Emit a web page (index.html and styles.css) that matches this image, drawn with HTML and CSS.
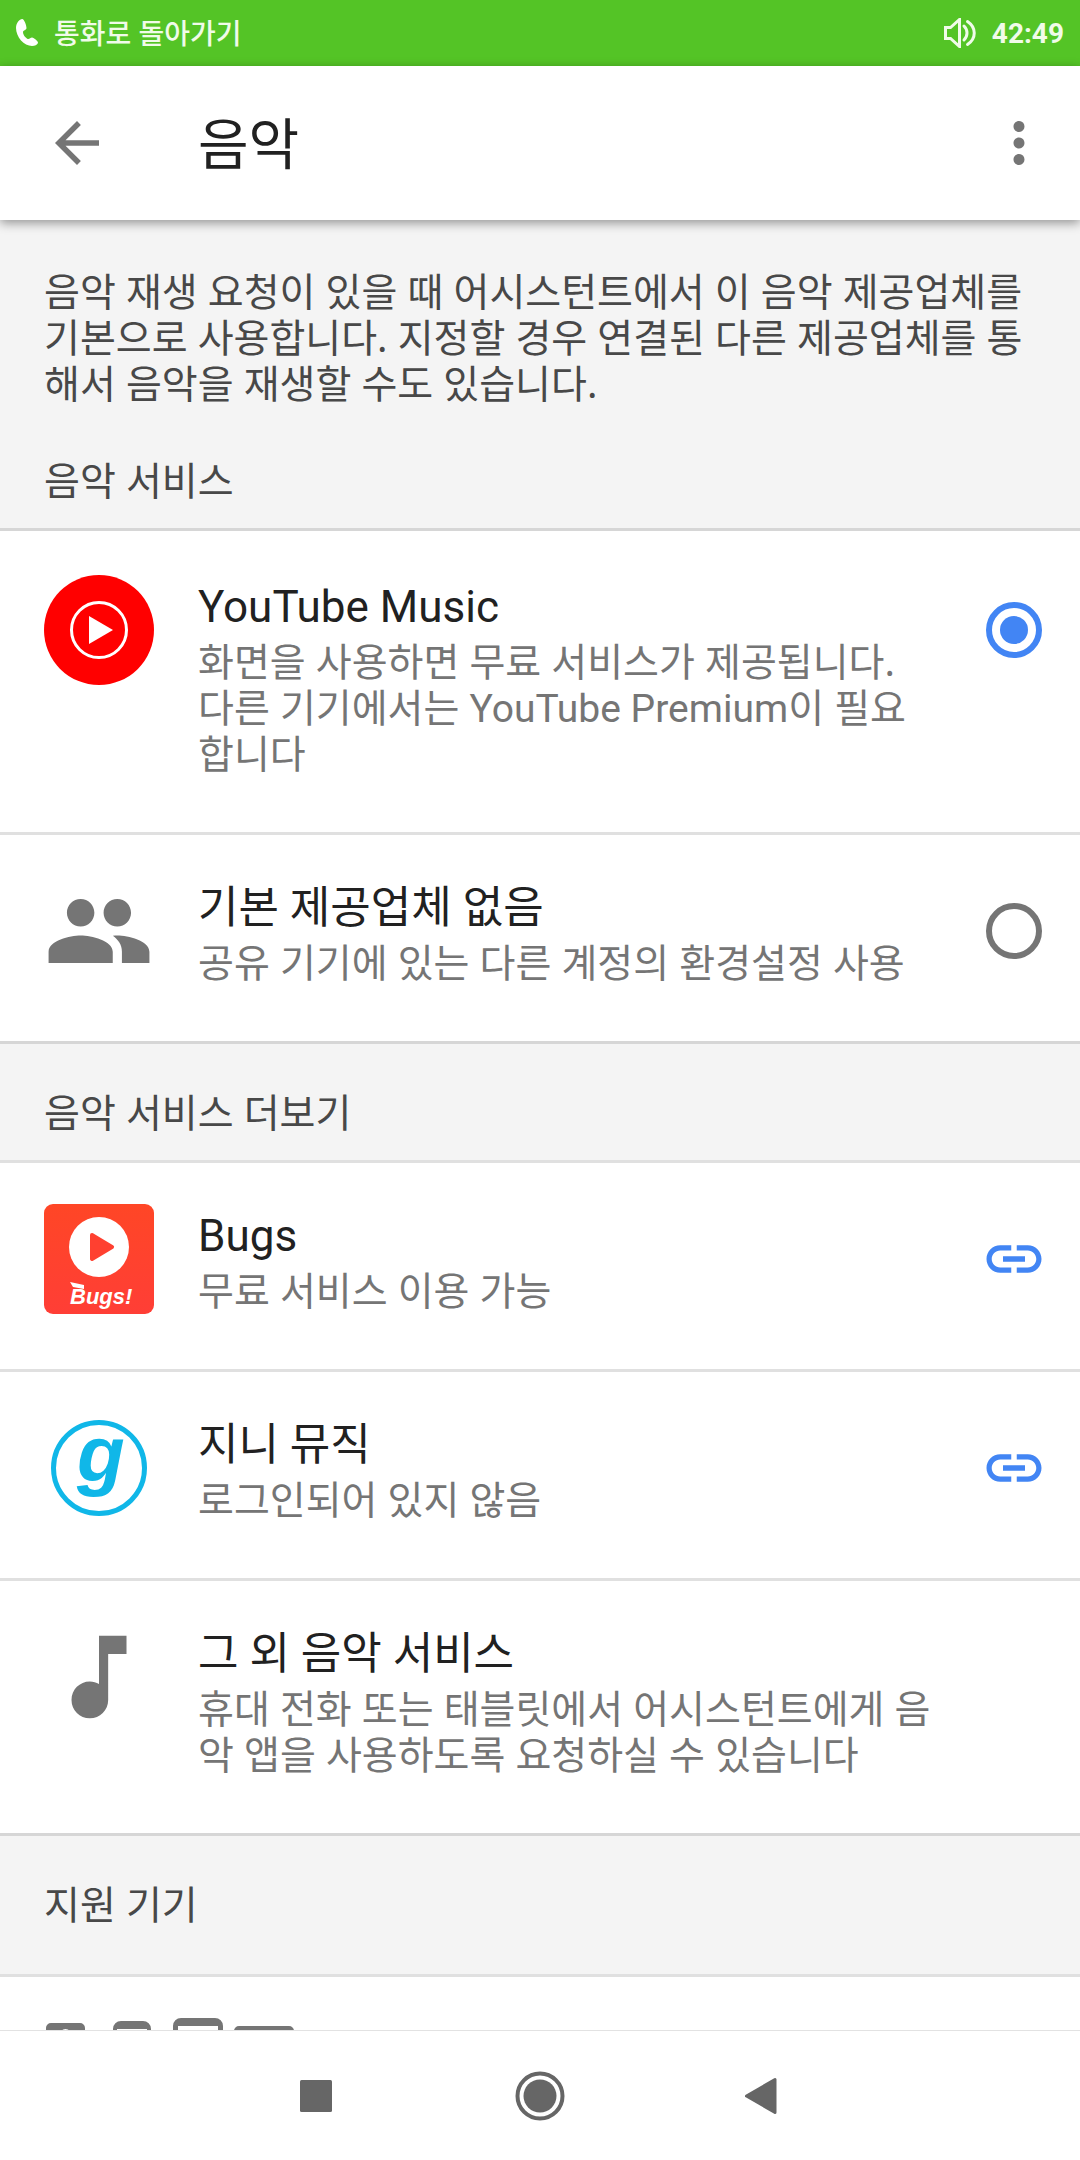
FILE: index.html
```html
<!DOCTYPE html>
<html lang="ko">
<head>
<meta charset="utf-8">
<meta name="viewport" content="width=device-width, initial-scale=1">
<title>음악</title>
<link rel="stylesheet" href="styles.css">
</head>
<body>
<button class="call-bar" type="button">
  <svg class="call-icon" viewBox="0 0 24 30" aria-hidden="true"><path d="M7 1C3 2 1 6 1 10c0 9 8 18 16 18 3 0 5-1 6-3 .6-1.300-4-5.500-6-5.500-1.500 0-2.500 1.700-4 1.500C11 20.500 8 17 8 14c0-1.500 3.500-2 3.500-4C11.500 7.500 9 .500 7 1z"/></svg>
  <span class="call-label">통화로 돌아가기</span>
  <svg class="volume-icon" viewBox="0 0 32 30" aria-hidden="true"><path d="M1.500 9.500h5L15.500 1.500v27L6.500 20.500h-5z"/><path d="M20 8c4 4 4 10 0 14"/><path d="M23.500 3.500c9 6 9 17 0 23"/></svg>
  <span class="call-time">42:49</span>
</button>

<header class="app-bar">
  <button class="icon-button" type="button" aria-label="뒤로">
    <svg class="icon" viewBox="0 0 24 24"><path d="M20 11H7.830l5.590-5.590L12 4l-8 8 8 8 1.410-1.410L7.830 13H20v-2z"/></svg>
  </button>
  <h1 class="app-title">음악</h1>
  <button class="icon-button" type="button" aria-label="옵션 더보기">
    <svg class="icon" viewBox="0 0 24 24"><path d="M12 8c1.100 0 2-.900 2-2s-.900-2-2-2-2 .900-2 2 .900 2 2 2zm0 2c-1.100 0-2 .900-2 2s.900 2 2 2 2-.900 2-2-.900-2-2-2zm0 6c-1.100 0-2 .900-2 2s.900 2 2 2 2-.900 2-2-.900-2-2-2z"/></svg>
  </button>
</header>

<main class="content">
  <div class="intro">
    <p class="intro-text">음악 재생 요청이 있을 때 어시스턴트에서 이 음악 제공업체를 기본으로 사용합니다. 지정할 경우 연결된 다른 제공업체를 통해서 음악을 재생할 수도 있습니다.</p>
    <h2 class="label">음악 서비스</h2>
  </div>

  <div class="group" role="radiogroup" aria-label="음악 서비스">
    <label class="row row-first" for="youtube">
      <svg class="logo" viewBox="0 0 110 110" aria-hidden="true">
        <circle cx="55" cy="55" r="55" fill="#f00"/>
        <circle cx="55" cy="55" r="27.500" fill="none" stroke="#fff" stroke-width="3"/>
        <path d="M45 41l24 14-24 14z" fill="#fff"/>
      </svg>
      <span class="row-text">
        <span class="row-title">YouTube Music</span>
        <span class="row-note">화면을 사용하면 무료 서비스가 제공됩니다. 다른 기기에서는 <span class="latin">YouTube Premium</span>이 필요합니다</span>
      </span>
      <span class="action"><input class="radio" type="radio" name="provider" id="youtube" checked></span>
    </label>
    <label class="row" for="none">
      <svg class="logo glyph" viewBox="0 0 24 24" aria-hidden="true"><path d="M16 11c1.660 0 2.990-1.340 2.990-3S17.660 5 16 5c-1.660 0-3 1.340-3 3s1.340 3 3 3zm-8 0c1.660 0 2.990-1.340 2.990-3S9.660 5 8 5C6.340 5 5 6.340 5 8s1.340 3 3 3zm0 2c-2.330 0-7 1.170-7 3.500V19h14v-2.500c0-2.330-4.670-3.500-7-3.500zm8 0c-.290 0-.620.020-.970.050 1.160.840 1.970 1.970 1.970 3.450V19h6v-2.500c0-2.330-4.670-3.500-7-3.500z"/></svg>
      <span class="row-text">
        <span class="row-title">기본 제공업체 없음</span>
        <span class="row-note">공유 기기에 있는 다른 계정의 환경설정 사용</span>
      </span>
      <span class="action"><input class="radio" type="radio" name="provider" id="none"></span>
    </label>
  </div>

  <h2 class="label section">음악 서비스 더보기</h2>
  <div class="group group-soft">
    <a class="row" href="#bugs">
      <svg class="logo" viewBox="0 0 110 110" aria-hidden="true">
        <defs><linearGradient id="bugs-fill" x1="0" y1="0" x2="0" y2="1"><stop offset="0" stop-color="#ff4626"/><stop offset="1" stop-color="#ff3e36"/></linearGradient></defs>
        <rect width="110" height="110" rx="9" fill="url(#bugs-fill)"/>
        <circle cx="55" cy="43" r="30" fill="#fff"/>
        <path d="M48 31l20 12-20 12z" fill="#ff4030" stroke="#ff4030" stroke-width="4" stroke-linejoin="round"/>
        <path d="M26 78l14 3v4l-11-2z" fill="#fff"/>
        <text class="bugs-name" x="26" y="100">Bugs!</text>
      </svg>
      <span class="row-text">
        <span class="row-title">Bugs</span>
        <span class="row-note">무료 서비스 이용 가능</span>
      </span>
      <span class="action"><svg class="icon link-icon" viewBox="0 0 24 24" aria-hidden="true"><path d="M3.900 12c0-1.710 1.390-3.100 3.100-3.100h4V7H7c-2.760 0-5 2.240-5 5s2.240 5 5 5h4v-1.900H7c-1.710 0-3.100-1.390-3.100-3.100zM8 13h8v-2H8v2zm9-6h-4v1.900h4c1.710 0 3.100 1.390 3.100 3.100s-1.390 3.100-3.100 3.100h-4V17h4c2.760 0 5-2.240 5-5s-2.240-5-5-5z"/></svg></span>
    </a>
    <a class="row" href="#genie">
      <svg class="logo" viewBox="0 0 110 110" aria-hidden="true">
        <circle cx="55" cy="55" r="45.500" fill="none" stroke="#10b7e8" stroke-width="5"/>
        <text class="genie-name" x="33" y="68">g</text>
      </svg>
      <span class="row-text">
        <span class="row-title">지니 뮤직</span>
        <span class="row-note">로그인되어 있지 않음</span>
      </span>
      <span class="action"><svg class="icon link-icon" viewBox="0 0 24 24" aria-hidden="true"><path d="M3.900 12c0-1.710 1.390-3.100 3.100-3.100h4V7H7c-2.760 0-5 2.240-5 5s2.240 5 5 5h4v-1.900H7c-1.710 0-3.100-1.390-3.100-3.100zM8 13h8v-2H8v2zm9-6h-4v1.900h4c1.710 0 3.100 1.390 3.100 3.100s-1.390 3.100-3.100 3.100h-4V17h4c2.760 0 5-2.240 5-5s-2.240-5-5-5z"/></svg></span>
    </a>
    <div class="row">
      <svg class="logo glyph" viewBox="0 0 24 24" aria-hidden="true"><path d="M12 3v10.550c-.590-.340-1.270-.550-2-.550-2.210 0-4 1.790-4 4s1.790 4 4 4 4-1.790 4-4V7h4V3h-6z"/></svg>
      <span class="row-text">
        <span class="row-title">그 외 음악 서비스</span>
        <span class="row-note">휴대 전화 또는 태블릿에서 어시스턴트에게 음악 앱을 사용하도록 요청하실 수 있습니다</span>
      </span>
    </div>
  </div>

  <h2 class="label section section-tall">지원 기기</h2>
  <div class="group group-soft devices">
    <svg class="device-icons" viewBox="0 0 264 80" role="img" aria-label="지원 기기">
      <path fill-rule="evenodd" d="M7 13h29a5 5 0 0 1 5 5v52a5 5 0 0 1-5 5H7a5 5 0 0 1-5-5V18a5 5 0 0 1 5-5zm14.500 6a6 6 0 1 0 0 12 6 6 0 0 0 0-12zm0 18a13 13 0 1 0 0 26 13 13 0 0 0 0-26z"/>
      <path fill-rule="evenodd" d="M77 11h22a8 8 0 0 1 8 8v50a8 8 0 0 1-8 8H77a8 8 0 0 1-8-8V19a8 8 0 0 1 8-8zm-4 8v44h30V19z"/>
      <path fill-rule="evenodd" d="M137 8h34a8 8 0 0 1 8 8v54a8 8 0 0 1-8 8h-34a8 8 0 0 1-8-8V16a8 8 0 0 1 8-8zm-3 8v50h40V16z"/>
      <path fill-rule="evenodd" d="M195 16h50a5 5 0 0 1 5 5v38a5 5 0 0 1-5 5h-50a5 5 0 0 1-5-5V21a5 5 0 0 1 5-5zm0 5v38h50V21z"/>
    </svg>
  </div>
</main>

<nav class="nav-bar" aria-label="시스템">
  <button class="nav-button" type="button" aria-label="최근 앱"><svg class="nav-icon" viewBox="0 0 50 50"><rect x="9" y="9" width="32" height="32" rx="1.500"/></svg></button>
  <button class="nav-button" type="button" aria-label="홈"><svg class="nav-icon" viewBox="0 0 50 50"><circle cx="25" cy="25" r="22.500" fill="none" stroke="#666" stroke-width="4"/><circle cx="25" cy="25" r="16.500"/></svg></button>
  <button class="nav-button" type="button" aria-label="뒤로"><svg class="nav-icon" viewBox="0 0 50 50"><path d="M7.500 25L36 8.500v33z" stroke="#666" stroke-width="3" stroke-linejoin="round"/></svg></button>
</nav>
</body>
</html>
```

FILE: styles.css
```css
* {
  box-sizing: border-box;
}

:root {
  --ui: "Roboto", "Noto Sans CJK KR", sans-serif;
  --text: "Noto Sans", "Noto Sans CJK KR", sans-serif;
  --gray: #757575;
  --blue: #4285f4;
  --line: #e0e0e0;
  --line-strong: #d6d6d6;
}

body {
  margin: 0;
  height: 100vh;
  display: flex;
  flex-direction: column;
  background: #fff;
  color: #212121;
  font-family: var(--text);
}

button {
  border: 0;
  padding: 0;
  background: none;
  font: inherit;
  color: inherit;
}

svg {
  display: block;
}

/* Ongoing call */
.call-bar {
  flex: none;
  display: flex;
  align-items: center;
  height: 66px;
  padding: 0 16px 0 15px;
  background: #54c426;
  color: #f0fbe9;
  font-size: 28px;
  line-height: 32px;
  text-align: left;
}

.call-icon {
  width: 24px;
  height: 30px;
  fill: #fff;
}

.call-label {
  flex: 1;
  margin-left: 15px;
  font-weight: 500;
}

.volume-icon {
  width: 32px;
  height: 30px;
  margin-right: 16px;
  fill: none;
  stroke: #f0fbe9;
  stroke-width: 3;
  stroke-linecap: round;
}

.call-time {
  padding-top: 2px;
  font-family: var(--ui);
  font-weight: 700;
}

/* App bar */
.app-bar {
  flex: none;
  position: relative;
  z-index: 1;
  display: flex;
  align-items: center;
  height: 154px;
  padding: 0 28px 0 44px;
  background: #fff;
  box-shadow: 0 3px 10px rgba(0, 0, 0, 0.4);
}

.icon-button,
.icon {
  width: 66px;
  height: 66px;
}

.icon {
  fill: var(--gray);
}

.app-title {
  flex: 1;
  margin: 0 0 0 88px;
  font-size: 55px;
  line-height: 66px;
  font-weight: 400;
}

/* Scrolling content */
.content {
  flex: 1;
  min-height: 0;
  overflow-y: auto;
  scrollbar-width: none;
  background: #f4f4f4;
}

.intro {
  padding: 48px 44px 25px;
  color: #484848;
}

.intro-text,
.label {
  margin: 0;
  font-size: 39px;
  line-height: 46px;
  font-weight: 400;
}

.intro-text {
  margin-bottom: 51px;
}

.label {
  color: #484848;
}

.section {
  padding: 45px 44px 25px;
}

.section-tall {
  padding-bottom: 47px;
}

.group {
  border-top: 3px solid var(--line-strong);
  border-bottom: 3px solid var(--line-strong);
  background: #fff;
}

.group-soft {
  border-top-color: var(--line);
}

.row {
  display: grid;
  grid-template-columns: 110px 1fr 66px;
  column-gap: 44px;
  align-items: start;
  padding: 41px 33px 55px 44px;
  color: inherit;
  text-decoration: none;
}

.row-first {
  padding-top: 44px;
}

.row + .row {
  border-top: 3px solid var(--line);
}

.logo {
  width: 110px;
  height: 110px;
  overflow: visible;
}

.glyph {
  fill: var(--gray);
}

.row-text {
  display: flex;
  flex-direction: column;
  gap: 5px;
  padding: 6px 0 1px;
}

.row-title {
  font-family: var(--ui);
  font-size: 44px;
  line-height: 52px;
}

.row-note {
  color: var(--gray);
  font-size: 39px;
  line-height: 46px;
}

.latin {
  font-family: var(--ui);
  line-height: 1;
}

.action {
  display: flex;
  align-items: center;
  justify-content: center;
  height: 110px;
}

.link-icon {
  fill: var(--blue);
}

.radio {
  appearance: none;
  display: grid;
  place-items: center;
  width: 56px;
  height: 56px;
  margin: 0;
  border: 6px solid var(--gray);
  border-radius: 50%;
}

.radio:checked {
  border-color: var(--blue);
}

.radio:checked::before {
  content: "";
  width: 28px;
  height: 28px;
  border-radius: 50%;
  background: var(--blue);
}

.bugs-name {
  fill: #fff;
  font: italic 700 22px "Liberation Sans", sans-serif;
}

.genie-name {
  fill: #10b7e8;
  font: italic 700 78px "Liberation Sans", sans-serif;
}

.devices {
  padding: 33px 44px;
}

.device-icons {
  width: 264px;
  height: 80px;
  fill: var(--gray);
}

/* System navigation */
.nav-bar {
  flex: none;
  display: flex;
  justify-content: center;
  height: 130px;
  border-top: 1px solid #e2e2e2;
  background: #fff;
}

.nav-button {
  display: flex;
  align-items: center;
  justify-content: center;
  width: 224px;
}

.nav-icon {
  width: 50px;
  height: 50px;
  fill: #666;
}
```
